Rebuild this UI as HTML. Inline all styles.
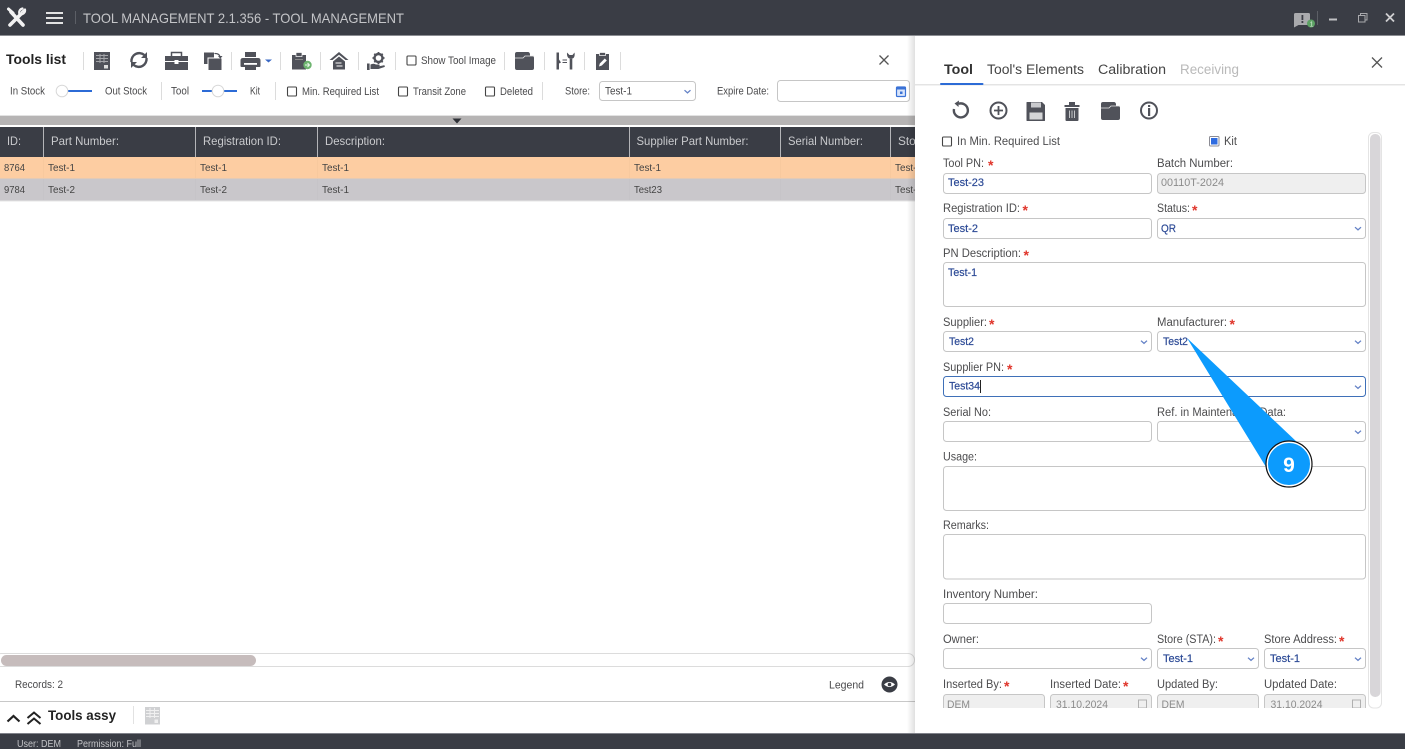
<!DOCTYPE html>
<html><head><meta charset="utf-8"><title>Tool Management</title>
<style>
html,body{margin:0;padding:0;background:#fff;width:1405px;height:749px;overflow:hidden}
svg{display:block;position:absolute;left:0;top:0;filter:blur(.3px)}
text{font-family:"Liberation Sans",sans-serif;font-size:11px;fill:#4a4a4c}
.h{font-size:11.8px;fill:#c9cacd}
.r{font-size:10.5px;fill:#444}
.l{font-size:11.5px;fill:#4c4c4e}
.s{font-size:10.6px;fill:#4a4a4c}
.v{font-size:11px;fill:#2c4a96;stroke:#2c4a96;stroke-width:.2}
.g{font-size:11px;fill:#8b8b8b}
.b{font-size:14px;font-weight:bold;fill:#222}
.tab{font-size:13.5px;fill:#444}
.st{font-size:14px;fill:#e0352b;font-weight:bold;transform:translate(-1px,2px)}
.box{fill:#fff;stroke:#c6c6c6;stroke-width:1}
.dis{fill:#efefef;stroke:#c6c6c6;stroke-width:1}
.sep{stroke:#dcdcdc;stroke-width:1}
.ic{fill:#50525a}
.ln{fill:none;stroke:#50525a;stroke-linecap:round}
</style></head><body>
<svg width="1405" height="749" viewBox="0 0 1405 749" xmlns="http://www.w3.org/2000/svg">
<defs>
<path id="chev" d="M-3-1.300L0 1.400L3-1.300" fill="none" stroke="#6482c6" stroke-width="1.300"/>
<rect id="cb" x="0" y="0" width="9" height="9" rx="1" fill="#fff" stroke="#444" stroke-width="1.100"/>
<linearGradient id="sh" x1="0" x2="1" y1="0" y2="0"><stop offset="0" stop-color="#000" stop-opacity="0"/><stop offset="1" stop-color="#000" stop-opacity=".12"/></linearGradient>
<g id="folder"><path class="ic" d="M0 2q0-2 2-2h11q1.500 0 2 2v2h2q2 0 2 2v10q0 2-2 2H2q-2 0-2-2z"/><path d="M0 6h8l2-2h9" fill="none" stroke="#e8e8e8" stroke-width=".8"/></g>
</defs>

<!-- title bar -->
<rect width="1405" height="35" fill="#3a3d45"/>
<rect y="35" width="1405" height="1" fill="#8b8d92"/>
<g stroke="#f2f2f2" stroke-linecap="round" fill="none">
<path d="M11 12L23 25" stroke-width="3.600"/>
<path d="M10 25L21 14" stroke-width="3.600"/>
<path d="M8.500 9L13 13" stroke-width="3"/>
<path d="M25 9.500a4 4 0 0 1-5.500 4.500M25 9.500l-3 2.300M19.500 14a4 4 0 0 1 3-5.500" stroke-width="2.200"/>
</g>
<g fill="#e2e2e2"><rect x="46" y="12" width="17" height="2"/><rect x="46" y="17" width="17" height="2"/><rect x="46" y="22" width="17" height="2"/></g>
<rect x="75" y="11" width="1" height="13" fill="#5c5f66"/>
<text x="83" y="23" style="font-size:14px;fill:#c4c5c8" textLength="321" lengthAdjust="spacingAndGlyphs">TOOL MANAGEMENT 2.1.356 - TOOL MANAGEMENT</text>
<path d="M1294 14.500q0-1.500 1.500-1.500h13q1.500 0 1.500 1.500v9q0 1.500-1.500 1.500h-10l-4.500 2.500z" fill="#a9aaad"/>
<rect x="1301.500" y="15" width="1.800" height="5" fill="#3a3d45"/><rect x="1301.500" y="21" width="1.800" height="2" fill="#3a3d45"/>
<circle cx="1311" cy="23.500" r="4" fill="#5ca264"/>
<text x="1309.500" y="26.500" style="font-size:7.500px;fill:#cfe8d0">1</text>
<rect x="1317" y="11" width="1" height="14" fill="#5c5f66"/>
<rect x="1329" y="18.500" width="8" height="2" fill="#c0c1c4"/>
<rect x="1358.500" y="15.500" width="6.500" height="6.500" fill="none" stroke="#a8a9ac"/>
<path d="M1360.500 15.500v-2h6.500v6.500h-2" fill="none" stroke="#a8a9ac"/>
<path d="M1386 13.500l8 8M1394 13.500l-8 8" stroke="#cfcfd1" stroke-width="1.800"/>

<!-- toolbar -->
<text x="6" y="64" class="b" textLength="60" lengthAdjust="spacingAndGlyphs">Tools list</text>
<g class="sep">
<path d="M83.500 52v18M231.500 52v18M280.500 52v18M320.500 52v18M358.500 52v18M395.500 52v18M504.500 52v18M544.500 52v18M584.500 52v18M620.500 52v18"/>
<path d="M161.500 82v18M275.500 82v18M542.500 82v18"/>
</g>
<!-- excel -->
<rect x="94" y="52" width="16" height="18" class="ic"/>
<g stroke="#a4a5a9" stroke-width="1"><path d="M96 55.500h12M96 58.500h12M96 61.500h12M100 54v9M104 54v9"/></g>
<rect x="104" y="65" width="4" height="3.500" fill="#ddd"/>
<!-- refresh -->
<path class="ln" stroke-width="2.400" style="stroke-linecap:butt" d="M131.500 62a7.800 7.800 0 0 1 12.800-7M146.500 58a7.800 7.800 0 0 1-12.800 7"/>
<path class="ic" d="M147 52v6h-6zM131 68v-6h6z"/>
<!-- toolbox -->
<path class="ic" d="M165 56h23v14h-23z"/>
<path d="M171.500 56v-3.500h10V56" fill="none" stroke="#50525a" stroke-width="1.500"/>
<rect x="165" y="61" width="23" height="1" fill="#fff"/>
<rect x="174.500" y="60" width="4" height="4" fill="#fff"/>
<!-- copy -->
<rect x="204" y="52.500" width="10" height="11.500" class="ic"/>
<rect x="208" y="58" width="14" height="12.500" class="ic" stroke="#fff" stroke-width="1"/>
<path class="ln" stroke-width="1.300" d="M215 53.500q4.500 0 5 3.500"/>
<path class="ic" d="M218 56h4.500l-2.200 2.800z"/>
<!-- printer -->
<rect x="245" y="52" width="11" height="5" class="ic"/>
<path class="ic" d="M243 58h15q2.500 0 2.500 2.500v5.500q0 1-1 1h-18q-1 0-1-1v-5.500q0-2.500 2.500-2.500z"/>
<rect x="244" y="63" width="13" height="1.800" fill="#fff"/>
<rect x="245" y="65.500" width="11" height="4.500" class="ic"/>
<path d="M265 59.500h7l-3.500 3z" fill="#3a68c4"/>
<!-- clipboard green -->
<path class="ic" d="M292 55h14v14.500h-14z"/>
<rect x="296" y="52.500" width="6" height="4" class="ic" stroke="#fff" stroke-width=".7"/>
<rect x="295" y="59" width="8" height="1" fill="#888"/>
<circle cx="307.500" cy="65" r="4.200" fill="#6db46f"/>
<path d="M305 65h4.500M307.500 63l2 2-2 2" stroke="#e8f5e8" fill="none" stroke-width="1"/>
<!-- home -->
<path class="ic" d="M339 52l9.500 8h-3l-6.500-5.300-6.500 5.300h-3z"/>
<path class="ic" d="M339 56.500l6 5v8h-12v-8z"/>
<path d="M335.500 63h6M342.500 66h-6" stroke="#fff" stroke-width="1"/>
<!-- hand gear -->
<circle cx="378.500" cy="58" r="4" fill="none" stroke="#50525a" stroke-width="2.400"/>
<g stroke="#50525a" stroke-width="1.800"><path d="M378.500 52v2M378.500 62v2M372.500 58h2M382.500 58h2M374.300 53.800l1.500 1.500M381.200 60.700l1.500 1.500M382.700 53.800l-1.500 1.500M374.300 62.200l1.500-1.500"/></g>
<path class="ic" d="M367 63.500h2.600v6.500h-2.600zM370.500 64.500q3-1.500 5.500 0h3q1.500.7 0 1.800l5-1q1.500.4.500 1.700l-6 2h-8z"/>
<!-- show tool image -->
<use href="#cb" x="407" y="56"/>
<text x="421" y="64" class="s" textLength="75" lengthAdjust="spacingAndGlyphs">Show Tool Image</text>
<use href="#folder" x="515" y="52"/>
<!-- tools -->
<path d="M556.500 52.500v17h2.500v-6l2-1-2-3v-7z" class="ic"/>
<path d="M562.500 60h4.500M562.500 62.500h4.500" stroke="#50525a" stroke-width="1"/>
<path class="ln" stroke-width="2.600" style="stroke-linecap:butt" d="M571 59v10.500"/>
<path d="M567 52.500q-.5 6 4 6.500q4.500-.5 3.500-6.500l-2 2.500h-3z" class="ic"/>
<!-- edit -->
<rect x="596" y="54" width="13" height="16" class="ic"/>
<rect x="599.500" y="52.500" width="6" height="3" class="ic" stroke="#fff" stroke-width=".7"/>
<path d="M599 66.500l.8-3 5-5 2 2-5 5z" fill="#fff"/>
<path d="M879.500 55.500l9 9M888.500 55.500l-9 9" stroke="#555" stroke-width="1.300"/>

<!-- row 2 -->
<text x="10" y="94.500" class="s" textLength="35" lengthAdjust="spacingAndGlyphs">In Stock</text>
<rect x="68" y="90" width="24" height="2" fill="#2c6bd6"/>
<circle cx="62" cy="91" r="5.800" fill="#fff" stroke="#d8d8d8"/>
<text x="105" y="94.500" class="s" textLength="42" lengthAdjust="spacingAndGlyphs">Out Stock</text>
<text x="171" y="94.500" class="s" textLength="18" lengthAdjust="spacingAndGlyphs">Tool</text>
<rect x="202" y="90" width="35" height="2" fill="#2c6bd6"/>
<circle cx="218" cy="91" r="5.800" fill="#fff" stroke="#d8d8d8"/>
<text x="250" y="94.500" class="s" textLength="10" lengthAdjust="spacingAndGlyphs">Kit</text>
<use href="#cb" x="287.500" y="87"/>
<text x="302" y="95" class="s" textLength="77" lengthAdjust="spacingAndGlyphs">Min. Required List</text>
<use href="#cb" x="398.500" y="87"/>
<text x="413" y="95" class="s" textLength="53" lengthAdjust="spacingAndGlyphs">Transit Zone</text>
<use href="#cb" x="485.500" y="87"/>
<text x="500" y="95" class="s" textLength="33" lengthAdjust="spacingAndGlyphs">Deleted</text>
<text x="565" y="94.500" class="s" textLength="25" lengthAdjust="spacingAndGlyphs">Store:</text>
<rect x="599.500" y="81.500" width="96" height="19" rx="3" class="box"/>
<text x="605" y="94.500" class="s" textLength="27" lengthAdjust="spacingAndGlyphs">Test-1</text>
<use href="#chev" x="687.500" y="91.500"/>
<text x="717" y="94.500" class="s" textLength="52" lengthAdjust="spacingAndGlyphs">Expire Date:</text>
<rect x="777.500" y="80.500" width="132" height="21" rx="3" class="box"/>
<rect x="896.500" y="87" width="9" height="9.500" rx="1" fill="#d8e4fa" stroke="#3a72d6" stroke-width="1.200"/>
<rect x="896.500" y="87" width="9" height="2.500" fill="#3a72d6"/>
<rect x="900" y="91.500" width="2.500" height="2.500" fill="#3a72d6"/>

<!-- table -->
<rect y="116" width="915" height="9" fill="#b6b4b4"/>
<rect y="115" width="915" height="1" fill="#e2e2e2"/>
<path d="M452.500 118.500h9l-4.500 5z" fill="#2e3036"/>
<rect y="127" width="915" height="30" fill="#3a3d45"/>
<rect y="157" width="915" height="21.500" fill="#fdcda2"/>
<rect y="178.500" width="915" height="22" fill="#c9c7cb"/>
<rect y="200.500" width="915" height="1" fill="#e5e5e5"/>
<g stroke="#b4b5b8"><path d="M43.500 127v30M195.500 127v30M317.500 127v30M629.500 127v30M780.500 127v30M890.500 127v30"/></g>
<g stroke="#f8c99e"><path d="M43.500 157v21M195.500 157v21M317.500 157v21M629.500 157v21M780.500 157v21M890.500 157v21"/></g>
<g stroke="#c6c4c8"><path d="M43.500 179v21M195.500 179v21M317.500 179v21M629.500 179v21M780.500 179v21M890.500 179v21"/></g>
<text x="7" y="145" class="h" textLength="14" lengthAdjust="spacingAndGlyphs">ID:</text>
<text x="51" y="145" class="h" textLength="68" lengthAdjust="spacingAndGlyphs">Part Number:</text>
<text x="203" y="145" class="h" textLength="78" lengthAdjust="spacingAndGlyphs">Registration ID:</text>
<text x="325" y="145" class="h" textLength="60" lengthAdjust="spacingAndGlyphs">Description:</text>
<text x="636.500" y="145" class="h" textLength="112" lengthAdjust="spacingAndGlyphs">Supplier Part Number:</text>
<text x="788" y="145" class="h" textLength="75" lengthAdjust="spacingAndGlyphs">Serial Number:</text>
<text x="898" y="145" class="h">Store</text>
<text x="4" y="171" class="r" textLength="21" lengthAdjust="spacingAndGlyphs">8764</text>
<text x="48" y="171" class="r" textLength="27" lengthAdjust="spacingAndGlyphs">Test-1</text>
<text x="200" y="171" class="r" textLength="27" lengthAdjust="spacingAndGlyphs">Test-1</text>
<text x="322" y="171" class="r" textLength="27" lengthAdjust="spacingAndGlyphs">Test-1</text>
<text x="634" y="171" class="r" textLength="27" lengthAdjust="spacingAndGlyphs">Test-1</text>
<text x="895" y="171" class="r" textLength="27" lengthAdjust="spacingAndGlyphs">Test-1</text>
<text x="4" y="193" class="r" textLength="21" lengthAdjust="spacingAndGlyphs">9784</text>
<text x="48" y="193" class="r" textLength="27" lengthAdjust="spacingAndGlyphs">Test-2</text>
<text x="200" y="193" class="r" textLength="27" lengthAdjust="spacingAndGlyphs">Test-2</text>
<text x="322" y="193" class="r" textLength="27" lengthAdjust="spacingAndGlyphs">Test-1</text>
<text x="634" y="193" class="r" textLength="28" lengthAdjust="spacingAndGlyphs">Test23</text>
<text x="895" y="193" class="r" textLength="27" lengthAdjust="spacingAndGlyphs">Test-1</text>

<!-- bottom left -->
<rect x="-5" y="653.500" width="919.500" height="13" rx="6.500" fill="#fff" stroke="#dcdcdc"/>
<rect x="1" y="655" width="255" height="11" rx="5.500" fill="#c6bcbc"/>
<text x="15" y="688" class="s" textLength="48" lengthAdjust="spacingAndGlyphs">Records: 2</text>
<text x="829" y="688.500" class="s" textLength="35" lengthAdjust="spacingAndGlyphs">Legend</text>
<circle cx="889.500" cy="684.500" r="8" fill="#3a3d45"/>
<path d="M884 684.500q5.500-5 11 0q-5.500 5-11 0z" fill="#fff"/>
<circle cx="889.500" cy="684.500" r="1.800" fill="#3a3d45"/>
<rect y="701" width="915" height="1" fill="#c8c8c8"/>
<path d="M7.500 721.500l6-5.500 6 5.500" fill="none" stroke="#222" stroke-width="2.200"/>
<path d="M27.500 718l6.500-5.500 6.500 5.500M27.500 724l6.500-5.500 6.500 5.500" fill="none" stroke="#222" stroke-width="2"/>
<text x="48" y="720" class="b" textLength="68" lengthAdjust="spacingAndGlyphs">Tools assy</text>
<rect x="133" y="706" width="1" height="18" fill="#e2e2e2"/>
<rect x="145" y="707" width="15" height="17.500" fill="#d0d1d3"/>
<g stroke="#f0f0f0"><path d="M146 710.500h13M146 713.500h13M146 716.500h13M150 708v10M154.500 708v10"/></g>
<rect x="154.500" y="719.500" width="3.500" height="3.500" fill="#f0f0f0"/>

<!-- panel -->
<rect x="907" y="36" width="8" height="697" fill="url(#sh)"/>
<rect x="915" y="36" width="490" height="697" fill="#fff"/>
<text x="944" y="74" class="b" style="font-size:14px;fill:#333" textLength="29" lengthAdjust="spacingAndGlyphs">Tool</text>
<text x="987" y="74" class="tab" textLength="97" lengthAdjust="spacingAndGlyphs">Tool's Elements</text>
<text x="1098" y="74" class="tab" textLength="68" lengthAdjust="spacingAndGlyphs">Calibration</text>
<text x="1180" y="74" class="tab" style="font-size:13.500px;fill:#b9b9b9" textLength="59" lengthAdjust="spacingAndGlyphs">Receiving</text>
<rect x="915" y="84" width="490" height="1.500" fill="#e4e4e4"/>
<rect x="940" y="83" width="43.500" height="2" rx="1" fill="#2c6bd6"/>
<path d="M1372 57.500l10 10M1382 57.500l-10 10" stroke="#555" stroke-width="1.300"/>

<!-- action icons -->
<path class="ln" stroke-width="2.400" style="stroke-linecap:butt" d="M958.500 103.800a7 7 0 1 1-4.500 5.200"/>
<path class="ic" d="M959 100.500l-.5 6.500-4-3.500z"/>
<circle cx="998.500" cy="110.500" r="8" fill="none" stroke="#50525a" stroke-width="2"/>
<path d="M994 110.500h9M998.500 106v9" stroke="#50525a" stroke-width="1.800"/>
<path class="ic" d="M1027 102h15l3 3v15.500q0 .5-.5.500h-17.500q-.5 0-.5-.5v-18q0-.5.500-.5z"/>
<rect x="1031" y="102.500" width="10" height="5" fill="#c9cacd"/>
<rect x="1029.500" y="112.500" width="13" height="7" fill="#d4d5d7"/>
<rect x="1064.500" y="105" width="15" height="2" class="ic"/>
<rect x="1069" y="102" width="6" height="3" class="ic"/>
<path class="ic" d="M1065.500 108h13v12q0 1-1 1h-11q-1 0-1-1z"/>
<path d="M1069.500 110.500v7.500M1072 110.500v7.500M1074.500 110.500v7.500" stroke="#c4c5c8" stroke-width="1"/>
<use href="#folder" x="1101" y="102"/>
<circle cx="1149" cy="110.500" r="8" fill="none" stroke="#50525a" stroke-width="2"/>
<rect x="1148" y="105" width="2.200" height="2" fill="#50525a"/><rect x="1148" y="108" width="2.200" height="8" fill="#50525a"/>

<use href="#cb" x="942.500" y="137"/>
<text x="957" y="145" class="l" textLength="103" lengthAdjust="spacingAndGlyphs">In Min. Required List</text>
<rect x="1209.500" y="136.500" width="9.500" height="9.500" rx="1" fill="#fff" stroke="#8c8c94" stroke-width="1"/>
<rect x="1211" y="138" width="6.500" height="6.500" fill="#2f6ce0"/>
<text x="1224" y="145" class="l" textLength="13" lengthAdjust="spacingAndGlyphs">Kit</text>

<!-- form -->
<text x="943" y="167" class="l" textLength="41" lengthAdjust="spacingAndGlyphs">Tool PN:</text><text x="989" y="168" class="st">*</text>
<text x="1157" y="167" class="l" textLength="76" lengthAdjust="spacingAndGlyphs">Batch Number:</text>
<rect x="943.500" y="173.500" width="208" height="20" rx="3" class="box"/>
<text x="948" y="186" class="v" textLength="36" lengthAdjust="spacingAndGlyphs">Test-23</text>
<rect x="1157.500" y="173.500" width="208" height="20" rx="3" class="dis"/>
<text x="1161" y="186" class="g" textLength="63" lengthAdjust="spacingAndGlyphs">00110T-2024</text>

<text x="943" y="212" class="l" textLength="77" lengthAdjust="spacingAndGlyphs">Registration ID:</text><text x="1023.500" y="213" class="st">*</text>
<text x="1157" y="212" class="l" textLength="33" lengthAdjust="spacingAndGlyphs">Status:</text><text x="1193" y="213" class="st">*</text>
<rect x="943.500" y="218.500" width="208" height="20" rx="3" class="box"/>
<text x="948" y="232" class="v" textLength="30" lengthAdjust="spacingAndGlyphs">Test-2</text>
<rect x="1157.500" y="218.500" width="208" height="20" rx="3" class="box"/>
<text x="1161" y="232" class="v" textLength="15" lengthAdjust="spacingAndGlyphs">QR</text>
<use href="#chev" x="1358" y="228.500"/>

<text x="943" y="257" class="l" textLength="78" lengthAdjust="spacingAndGlyphs">PN Description:</text><text x="1024.500" y="258" class="st">*</text>
<rect x="943.500" y="262.500" width="422" height="44" rx="3" class="box"/>
<text x="948" y="276" class="v" textLength="29" lengthAdjust="spacingAndGlyphs">Test-1</text>

<text x="943" y="326" class="l" textLength="44" lengthAdjust="spacingAndGlyphs">Supplier:</text><text x="990" y="327" class="st">*</text>
<text x="1157" y="326" class="l" textLength="70" lengthAdjust="spacingAndGlyphs">Manufacturer:</text><text x="1230.500" y="327" class="st">*</text>
<rect x="943.500" y="331.500" width="208" height="20" rx="3" class="box"/>
<text x="949" y="345" class="v" textLength="25" lengthAdjust="spacingAndGlyphs">Test2</text>
<use href="#chev" x="1144" y="342"/>
<rect x="1157.500" y="331.500" width="208" height="20" rx="3" class="box"/>
<text x="1163" y="345" class="v" textLength="25" lengthAdjust="spacingAndGlyphs">Test2</text>
<use href="#chev" x="1358" y="342"/>

<text x="943" y="371" class="l" textLength="61" lengthAdjust="spacingAndGlyphs">Supplier PN:</text><text x="1008" y="372" class="st">*</text>
<rect x="943.500" y="376.500" width="422" height="20" rx="3" fill="#fff" stroke="#3f70b8"/>
<text x="949" y="389.500" class="v" textLength="31" lengthAdjust="spacingAndGlyphs">Test34</text>
<rect x="980" y="380" width="1" height="13" fill="#222"/>
<use href="#chev" x="1358" y="387"/>

<text x="943" y="416" class="l" textLength="48" lengthAdjust="spacingAndGlyphs">Serial No:</text>
<text x="1157" y="416" class="l" textLength="129" lengthAdjust="spacingAndGlyphs">Ref. in Maintenance Data:</text>
<rect x="943.500" y="421.500" width="208" height="20" rx="3" class="box"/>
<rect x="1157.500" y="421.500" width="208" height="20" rx="3" class="box"/>
<use href="#chev" x="1358" y="432"/>

<text x="943" y="460.500" class="l" textLength="34" lengthAdjust="spacingAndGlyphs">Usage:</text>
<rect x="943.500" y="466.500" width="422" height="44" rx="3" class="box"/>
<text x="943" y="529" class="l" textLength="46" lengthAdjust="spacingAndGlyphs">Remarks:</text>
<rect x="943.500" y="534.500" width="422" height="44.500" rx="3" class="box"/>
<text x="943" y="598" class="l" textLength="95" lengthAdjust="spacingAndGlyphs">Inventory Number:</text>
<rect x="943.500" y="603.500" width="208" height="20" rx="3" class="box"/>

<text x="943" y="643" class="l" textLength="36" lengthAdjust="spacingAndGlyphs">Owner:</text>
<text x="1157" y="643" class="l" textLength="59" lengthAdjust="spacingAndGlyphs">Store (STA):</text><text x="1219" y="644" class="st">*</text>
<text x="1264" y="643" class="l" textLength="73" lengthAdjust="spacingAndGlyphs">Store Address:</text><text x="1340" y="644" class="st">*</text>
<rect x="943.500" y="648.500" width="208" height="20" rx="3" class="box"/>
<use href="#chev" x="1144" y="659"/>
<rect x="1157.500" y="648.500" width="101" height="20" rx="3" class="box"/>
<text x="1163" y="662" class="v" textLength="30" lengthAdjust="spacingAndGlyphs">Test-1</text>
<use href="#chev" x="1251" y="659"/>
<rect x="1264.500" y="648.500" width="101" height="20" rx="3" class="box"/>
<text x="1270" y="662" class="v" textLength="30" lengthAdjust="spacingAndGlyphs">Test-1</text>
<use href="#chev" x="1358" y="659"/>

<text x="943" y="688" class="l" textLength="59" lengthAdjust="spacingAndGlyphs">Inserted By:</text><text x="1005" y="689" class="st">*</text>
<text x="1050" y="688" class="l" textLength="71" lengthAdjust="spacingAndGlyphs">Inserted Date:</text><text x="1124" y="689" class="st">*</text>
<text x="1157" y="688" class="l" textLength="61" lengthAdjust="spacingAndGlyphs">Updated By:</text>
<text x="1264" y="688" class="l" textLength="73" lengthAdjust="spacingAndGlyphs">Updated Date:</text>
<rect x="943.500" y="694.500" width="101" height="24" rx="3" class="dis"/>
<rect x="1050.500" y="694.500" width="101" height="24" rx="3" class="dis"/>
<rect x="1157.500" y="694.500" width="101" height="24" rx="3" class="dis"/>
<rect x="1264.500" y="694.500" width="101" height="24" rx="3" class="dis"/>
<text x="947" y="708" class="g" textLength="23" lengthAdjust="spacingAndGlyphs">DEM</text>
<text x="1056" y="708" class="g" textLength="52" lengthAdjust="spacingAndGlyphs">31.10.2024</text>
<text x="1161.500" y="708" class="g" textLength="23" lengthAdjust="spacingAndGlyphs">DEM</text>
<text x="1270.500" y="708" class="g" textLength="52" lengthAdjust="spacingAndGlyphs">31.10.2024</text>
<rect x="1138.500" y="700" width="8" height="8" fill="none" stroke="#b0b0b0"/>
<rect x="1352.500" y="700" width="8" height="8" fill="none" stroke="#b0b0b0"/>
<rect x="930" y="708" width="437" height="25" fill="#fff"/>

<!-- panel scroll -->
<rect x="1368.500" y="132.500" width="13" height="575.500" rx="5" fill="#fff" stroke="#e4e4e4"/>
<rect x="1370" y="134" width="10.500" height="563" rx="5" fill="#d8d6d9"/>

<!-- status -->
<rect y="733" width="1405" height="16" fill="#3a3d45"/>
<rect y="733" width="1405" height="1" fill="#80828a"/>
<text x="17" y="747" style="font-size:10px;fill:#c4c5c8" textLength="44" lengthAdjust="spacingAndGlyphs">User: DEM</text>
<text x="77" y="747" style="font-size:10px;fill:#c4c5c8" textLength="64" lengthAdjust="spacingAndGlyphs">Permission: Full</text>

<!-- callout -->
<polygon points="1187,338 1298,443 1266,467" fill="#0c9bfd"/>
<circle cx="1289" cy="464" r="22" fill="#0c9bfd" stroke="#fff" stroke-width="2"/>
<circle cx="1289" cy="464" r="23" fill="none" stroke="#111" stroke-width="1.200"/>
<text x="1289" y="472" text-anchor="middle" style="font-size:21px;font-weight:bold;fill:#fff">9</text>
</svg>
</body></html>
